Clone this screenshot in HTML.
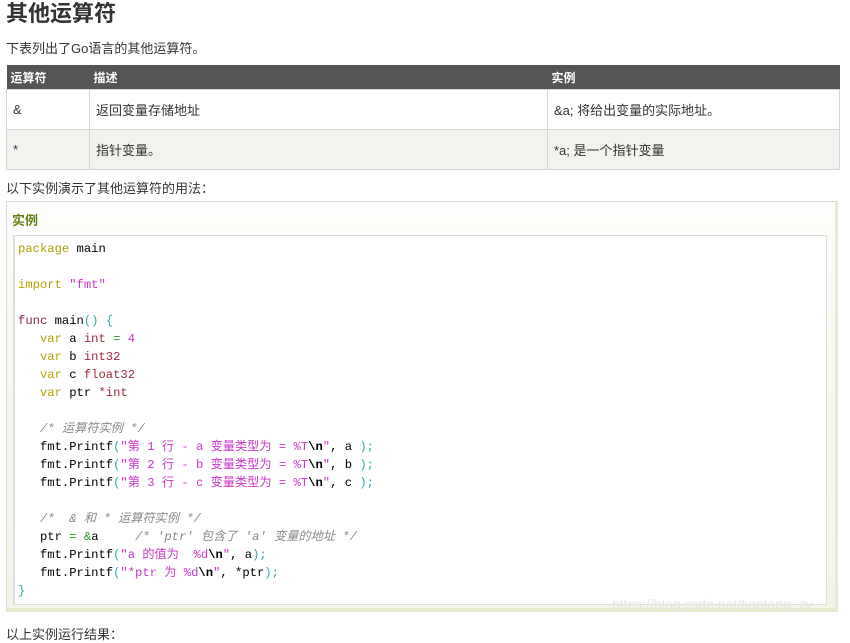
<!DOCTYPE html>
<html><head><meta charset="utf-8"><style>
body{margin:0;width:850px;height:626px;overflow:hidden;background:#fff;font-family:"Liberation Sans","Noto Sans CJK SC",sans-serif;color:#333;position:relative}
.a{position:absolute}
h1{position:absolute;left:6px;top:0;margin:0;font-size:22px;font-weight:bold;color:#333;line-height:28px}
table{position:absolute;left:6px;top:65px;width:834px;border-collapse:collapse;font-size:13px;table-layout:fixed}
th{background:#555;color:#fff;text-align:left;height:24px;padding:0 0 0 4px;font-weight:bold;font-size:12px}
td{border:1px solid #d4d4d4;padding:0 0 0 6px;height:39px}
tr.g td{background:#f3f2ee}
.box{position:absolute;left:6px;top:201px;width:828px;height:406px;border:1px solid #d8d8d8;border-bottom:4px solid #e2ebcc;border-right:3px solid #e5ecd3;background:linear-gradient(#fff,#fbfcf6 40px,#f2f5e8)}
.code{position:absolute;left:13px;top:235px;width:811px;height:368px;background:#fff;border:1px solid #ddd;border-left:2px solid #ddd}
pre{position:absolute;left:18px;top:240px;margin:0;font-family:"Liberation Mono","Noto Sans CJK SC",monospace;font-size:12.2px;line-height:18px;color:#000}
.k{color:#b3a300}.f{color:#7d2855}.t{color:#a22a3f}.s{color:#c838c8}.c{color:#888;font-style:italic}.o{color:#2a9a2a}.b{color:#3aa}
</style></head><body>
<h1>其他运算符</h1>
<div class="a" style="left:6px;top:38px;font-size:13px">下表列出了Go语言的其他运算符。</div>
<table>
<tr><th style="width:79px">运算符</th><th style="width:454px">描述</th><th>实例</th></tr>
<tr><td>&amp;</td><td>返回变量存储地址</td><td>&amp;a; 将给出变量的实际地址。</td></tr>
<tr class="g"><td>*</td><td>指针变量。</td><td>*a; 是一个指针变量</td></tr>
</table>
<div class="a" style="left:6px;top:178px;font-size:13px">以下实例演示了其他运算符的用法：</div>
<div class="box"></div>
<div class="a" style="left:12px;top:210px;font-size:13px;font-weight:bold;color:#617f10">实例</div>
<div class="code"></div>
<pre><span class="k">package</span> main

<span class="k">import</span> <span class="s">"fmt"</span>

<span class="f">func</span> main<span class="b">()</span> <span class="b">{</span>
   <span class="k">var</span> a <span class="t">int</span> <span class="o">=</span> <span class="s">4</span>
   <span class="k">var</span> b <span class="t">int32</span>
   <span class="k">var</span> c <span class="t">float32</span>
   <span class="k">var</span> ptr <span class="t">*int</span>

   <span class="c">/* 运算符实例 */</span>
   fmt.Printf<span class="b">(</span><span class="s">"第 1 行 - a 变量类型为 = %T</span><b>\n</b><span class="s">"</span>, a <span class="b">);</span>
   fmt.Printf<span class="b">(</span><span class="s">"第 2 行 - b 变量类型为 = %T</span><b>\n</b><span class="s">"</span>, b <span class="b">);</span>
   fmt.Printf<span class="b">(</span><span class="s">"第 3 行 - c 变量类型为 = %T</span><b>\n</b><span class="s">"</span>, c <span class="b">);</span>

   <span class="c">/*  &amp; 和 * 运算符实例 */</span>
   ptr <span class="o">=</span> <span class="o">&amp;</span>a     <span class="c">/* 'ptr' 包含了 'a' 变量的地址 */</span>
   fmt.Printf<span class="b">(</span><span class="s">"a 的值为  %d</span><b>\n</b><span class="s">"</span>, a<span class="b">);</span>
   fmt.Printf<span class="b">(</span><span class="s">"*ptr 为 %d</span><b>\n</b><span class="s">"</span>, *ptr<span class="b">);</span>
<span class="b">}</span></pre>
<div class="a" style="left:612px;top:596px;font-size:14px;color:#e4e8e4">https://blog.csdn.net/tiantang_zy</div>
<div class="a" style="left:6px;top:624px;font-size:13px">以上实例运行结果：</div>
</body></html>
